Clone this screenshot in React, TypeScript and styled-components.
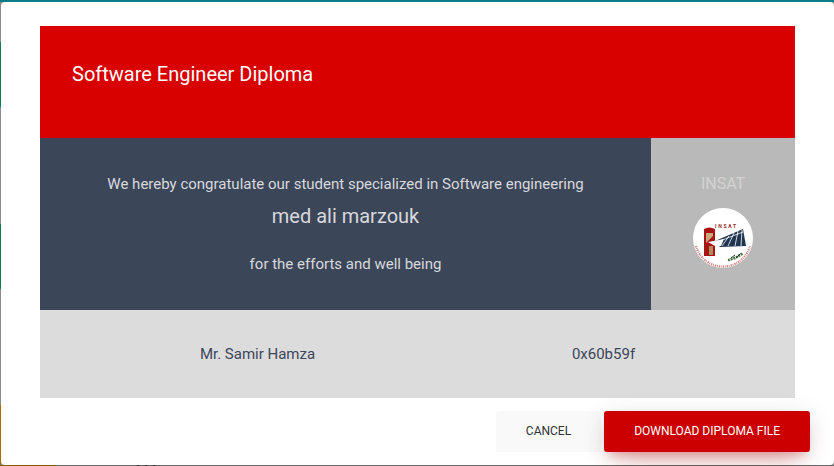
import React from 'react';
import styled, { createGlobalStyle } from 'styled-components';

const GlobalStyle = createGlobalStyle`
  html,
  body {
    margin: 0;
    height: 100%;
    overflow: hidden;
    background: #8c8c8c;
    font-family: Roboto, "Liberation Sans", sans-serif;
  }
`;

const Page = styled.div`
  position: relative;
  width: 834px;
  height: 466px;
  overflow: hidden;
  padding: 2px 0 1px 1px;
  box-sizing: border-box;
  background: #8c8c8c;
`;

/* the dimmed page peeking out behind the modal */
const TopEdge = styled.div`
  position: absolute;
  top: 0;
  left: 0;
  right: 0;
  height: 2px;
  background: #0a7d88;
`;

const BottomEdge = styled.div`
  position: absolute;
  left: 0;
  right: 0;
  bottom: 0;
  height: 1px;
  background: #666;
`;

const BottomAccent = styled.div`
  position: absolute;
  left: 0;
  bottom: 0;
  width: 56px;
  height: 1px;
  background: #8a5a06;
`;

const BottomGlyphs = styled.div`
  position: absolute;
  left: 137px;
  bottom: 0;
  width: 23px;
  height: 1px;
  background: repeating-linear-gradient(90deg, #2b2b33 0 2px, #666 2px 8px);
`;

const SideStripe = styled.div<{ $top: number; $height: number; $color: string }>`
  position: absolute;
  left: 0;
  top: ${p => p.$top}px;
  width: 1px;
  height: ${p => p.$height}px;
  background: ${p => p.$color};
`;

const Modal = styled.div`
  position: relative;
  height: 100%;
  box-sizing: border-box;
  padding: 24px 24px 0 39px;
  background: #fff;
  border-radius: 4px;
`;

const Card = styled.div`
  width: 755px;
`;

const Header = styled.div`
  height: 112px;
  display: flex;
  align-items: center;
  padding: 0 32px 16px;
  box-sizing: border-box;
  background: #d90000;
  color: #fff;
  font-size: 20px;
`;

const Middle = styled.div`
  height: 172px;
  display: flex;
`;

const Message = styled.div`
  flex: 1;
  background: #3c4659;
  color: #d7d9dd;
  font-size: 15px;
  display: flex;
  flex-direction: column;
  align-items: center;
`;

const MessageLine = styled.div<{ $top: number }>`
  margin-top: ${p => p.$top}px;
  line-height: 20px;
`;

const StudentName = styled.div`
  margin-top: 10px;
  font-size: 20px;
  line-height: 24px;
`;

const Issuer = styled.div`
  width: 144px;
  background: #b9b9b9;
  color: #d3d3d3;
  font-size: 16px;
  display: flex;
  flex-direction: column;
  align-items: center;
  padding-top: 36px;
  box-sizing: border-box;
`;

const IssuerName = styled.div`
  line-height: 20px;
  margin-bottom: 14px;
`;

const Footer = styled.div`
  height: 88px;
  display: grid;
  grid-template-columns: 435px 257px;
  background: #dcdcdc;
  color: #3c4659;
  font-size: 15px;
`;

const FooterCell = styled.div`
  display: flex;
  align-items: center;
  justify-content: center;
`;

const Actions = styled.div`
  margin-top: 13px;
  display: flex;
  justify-content: flex-end;
  gap: 3px;
`;

const Button = styled.button<{ $primary?: boolean }>`
  height: 41px;
  padding: 0 30px;
  border: 0;
  border-radius: 3px;
  font-family: inherit;
  font-size: 12px;
  line-height: 17px;
  text-transform: uppercase;
  color: ${p => (p.$primary ? '#fff' : '#333')};
  background: ${p => (p.$primary ? '#cc0000' : '#f9f9f9')};
  box-shadow: ${p =>
    p.$primary
      ? '0 14px 26px -12px rgba(204,0,0,.42), 0 4px 23px 0 rgba(0,0,0,.12), 0 8px 10px -5px rgba(204,0,0,.2)'
      : 'none'};
`;

const InsatLogo = () => (
  <svg width="60" height="60" viewBox="0 0 60 60" role="img" aria-label="INSAT">
    <circle cx="30" cy="30" r="30" fill="#fff" />
    <text x="22" y="20" fontSize="5" fontWeight="700" letterSpacing="1.7" fill="#9c1c1c" fontFamily="Roboto, sans-serif">
      INSAT
    </text>
    <path d="M11 21 Q16 18 22 21 V48 H11 Z" fill="#a81414" />
    <path d="M13 25 H20 V28 L13 35 Z" fill="#c9a87a" />
    <path d="M22 33 L50 21 L53 38 L27 39 Z" fill="#1f3550" />
    <path d="M24 34 L50 24 M29 38 L36 28 M35 38 L41 25 M42 38 L45 23 M48 38 L49 22" stroke="#fff" strokeWidth="0.8" fill="none" />
    <path d="M15 34 L31 31 L28 38 L22 38 Z" fill="#fff" />
    <rect x="16" y="38" width="4" height="9" fill="#b08a5a" />
    <path d="M3 38 A28 28 0 0 0 57 38" stroke="#c05050" strokeWidth="2.2" strokeDasharray="1.4 0.8 0.8 1" fill="none" opacity="0.7" />
    <path d="M35 52 Q42 51 50 45" stroke="#4a7344" strokeWidth="2.6" strokeDasharray="2 0.8" fill="none" />
    <path d="M38 50 L42 47 M43 50 L47 46" stroke="#1e3a1e" strokeWidth="1" fill="none" />
  </svg>
);

export default function App() {
  return (
    <Page>
      <GlobalStyle />
      <TopEdge />
      <SideStripe $top={42} $height={65} $color="#0a8050" />
      <SideStripe $top={224} $height={65} $color="#0a8050" />
      <SideStripe $top={405} $height={61} $color="#a86a00" />
      <BottomEdge />
      <BottomAccent />
      <BottomGlyphs />
      <Modal>
        <Card>
          <Header>Software Engineer Diploma</Header>
          <Middle>
            <Message>
              <MessageLine $top={36}>We hereby congratulate our student specialized in Software engineering</MessageLine>
              <StudentName>med ali marzouk</StudentName>
              <MessageLine $top={26}>for the efforts and well being</MessageLine>
            </Message>
            <Issuer>
              <IssuerName>INSAT</IssuerName>
              <InsatLogo />
            </Issuer>
          </Middle>
          <Footer>
            <FooterCell>Mr. Samir Hamza</FooterCell>
            <FooterCell>0x60b59f</FooterCell>
          </Footer>
        </Card>
        <Actions>
          <Button>Cancel</Button>
          <Button $primary>Download Diploma File</Button>
        </Actions>
      </Modal>
    </Page>
  );
}
